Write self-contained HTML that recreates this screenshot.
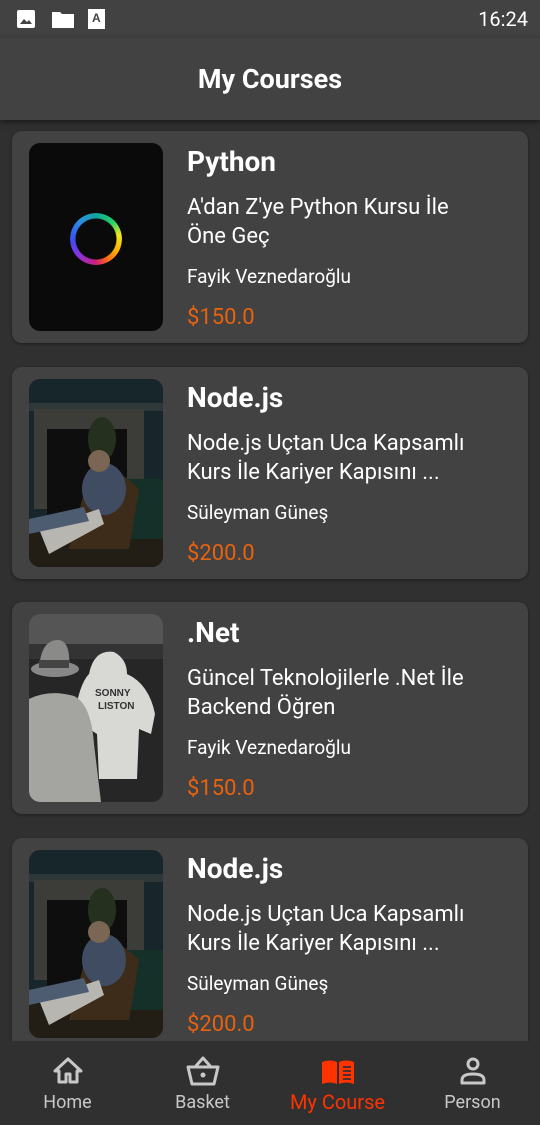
<!DOCTYPE html>
<html><head><meta charset="utf-8"><style>
*{margin:0;padding:0;box-sizing:border-box}
body{width:540px;height:1125px;background:#303030;font-family:"Roboto","Liberation Sans",sans-serif;color:#fff;overflow:hidden;position:relative}
.status{position:absolute;top:0;left:0;width:540px;height:38px;background:#424242}
.bar{position:absolute;top:38px;left:0;width:540px;height:82px;background:#424242;box-shadow:0 2px 6px rgba(0,0,0,.5);z-index:2}
.bar h1{font-size:27px;font-weight:bold;text-align:center;line-height:82px;margin-top:0}
.time{position:absolute;right:12px;top:7px;font-size:20px}
.card{position:absolute;left:12px;width:516px;height:212px;background:#424242;border-radius:10px;box-shadow:0 1px 3px rgba(0,0,0,.4)}
.img{position:absolute;left:17px;top:12px;width:134px;height:188px;border-radius:11px;overflow:hidden}
.t{position:absolute;left:175px;top:14px;font-size:28px;font-weight:bold}
.s{position:absolute;left:175px;top:62px;font-size:22px;line-height:29px;width:330px}
.a{position:absolute;left:175px;top:134px;font-size:19px}
.p{position:absolute;left:175px;top:174px;font-size:22px;color:#e8620f}
.nav{position:absolute;top:1041px;left:0;width:540px;height:84px;background:#303030;z-index:3}
.it{position:absolute;top:0;width:135px;text-align:center;color:#c8c8c8;font-size:18px}
.it svg{display:block;margin:15px auto 0}
.it span{display:block;margin-top:6px}
.ring{position:absolute;left:41px;top:70px;width:52px;height:52px;border-radius:50%;background:conic-gradient(#10a59a,#23d46a 45deg,#f0e820 80deg,#ffb000 120deg,#ff6a10 150deg,#d0207a 180deg,#8a30e0 225deg,#3a50f0 270deg,#2a90e0 320deg,#10a59a);-webkit-mask:radial-gradient(circle,transparent 20px,#000 21px);mask:radial-gradient(circle,transparent 20px,#000 21px)}
</style></head><body>
<div class="status">
<svg style="position:absolute;left:16px;top:9px" width="20" height="20"><rect x="1" y="1" width="18" height="18" rx="2" fill="#fff"/><path d="M4 15l4-5 3 3 2-2 3 4z" fill="#424242"/></svg>
<svg style="position:absolute;left:51px;top:9px" width="24" height="20"><path d="M1 3h8l2 2h12v14H1z" fill="#fff"/></svg>
<svg style="position:absolute;left:88px;top:8px" width="18" height="22"><rect x="0" y="1" width="17" height="20" fill="#fff"/><text x="4" y="14" font-size="12" font-weight="bold" fill="#424242" font-family="Liberation Sans">A</text></svg>
<div class="time">16:24</div>
</div>
<div class="bar"><h1>My Courses</h1></div>

<div class="card" style="top:131px">
<div class="img" style="background:#0a0a0a"><div class="ring"></div></div>
<div class="t">Python</div>
<div class="s">A'dan Z'ye Python Kursu İle<br>Öne Geç</div>
<div class="a">Fayik Veznedaroğlu</div>
<div class="p">$150.0</div>
</div>

<div class="card" style="top:367px">
<div class="img"><svg width="134" height="188"><rect width="134" height="188" fill="#16262a"/><rect x="0" y="24" width="134" height="8" fill="#2e3838"/><rect x="5" y="30" width="110" height="100" fill="#3c3c38"/><rect x="18" y="50" width="80" height="90" fill="#0e0e0e"/><rect x="0" y="140" width="134" height="48" fill="#221e16"/><rect x="98" y="100" width="36" height="60" fill="#153028"/><ellipse cx="73" cy="60" rx="14" ry="22" fill="#26301f"/><path d="M60 95 Q80 80 110 110 L100 170 L40 170 Z" fill="#3e2c1a"/><ellipse cx="75" cy="110" rx="22" ry="26" fill="#404c62"/><circle cx="70" cy="82" r="11" fill="#7a6652"/><path d="M10 150 L70 130 L75 145 L20 175 Z" fill="#b8b6b0"/><path d="M0 140 L55 128 L60 142 L0 155Z" fill="#4e5c72"/></svg></div>
<div class="t">Node.js</div>
<div class="s">Node.js Uçtan Uca Kapsamlı<br>Kurs İle Kariyer Kapısını ...</div>
<div class="a">Süleyman Güneş</div>
<div class="p">$200.0</div>
</div>

<div class="card" style="top:602px">
<div class="img"><svg width="134" height="188"><rect width="134" height="188" fill="#262626"/><rect x="0" y="0" width="134" height="30" fill="#555"/><rect x="0" y="30" width="134" height="15" fill="#333"/><path d="M60 60 Q65 35 85 38 Q98 45 98 60 Q120 70 126 100 L122 120 L110 115 L108 165 L70 165 L68 120 L45 105 Q50 70 60 60Z" fill="#d8d8d4"/><text x="66" y="82" font-size="10" font-weight="bold" fill="#333" font-family="Liberation Sans">SONNY</text><text x="69" y="95" font-size="10" font-weight="bold" fill="#333" font-family="Liberation Sans">LISTON</text><path d="M0 85 Q20 75 45 82 Q62 90 65 130 L72 188 L0 188Z" fill="#a4a4a0"/><ellipse cx="26" cy="55" rx="24" ry="8" fill="#888"/><path d="M10 55 Q12 25 30 26 Q42 28 40 55Z" fill="#8a8a88"/><rect x="10" y="46" width="30" height="8" fill="#444"/></svg></div>
<div class="t">.Net</div>
<div class="s">Güncel Teknolojilerle .Net İle<br>Backend Öğren</div>
<div class="a">Fayik Veznedaroğlu</div>
<div class="p">$150.0</div>
</div>

<div class="card" style="top:838px">
<div class="img"><svg width="134" height="188"><rect width="134" height="188" fill="#16262a"/><rect x="0" y="24" width="134" height="8" fill="#2e3838"/><rect x="5" y="30" width="110" height="100" fill="#3c3c38"/><rect x="18" y="50" width="80" height="90" fill="#0e0e0e"/><rect x="0" y="140" width="134" height="48" fill="#221e16"/><rect x="98" y="100" width="36" height="60" fill="#153028"/><ellipse cx="73" cy="60" rx="14" ry="22" fill="#26301f"/><path d="M60 95 Q80 80 110 110 L100 170 L40 170 Z" fill="#3e2c1a"/><ellipse cx="75" cy="110" rx="22" ry="26" fill="#404c62"/><circle cx="70" cy="82" r="11" fill="#7a6652"/><path d="M10 150 L70 130 L75 145 L20 175 Z" fill="#b8b6b0"/><path d="M0 140 L55 128 L60 142 L0 155Z" fill="#4e5c72"/></svg></div>
<div class="t">Node.js</div>
<div class="s">Node.js Uçtan Uca Kapsamlı<br>Kurs İle Kariyer Kapısını ...</div>
<div class="a">Süleyman Güneş</div>
<div class="p">$200.0</div>
</div>

<div class="nav">
<div class="it" style="left:0"><svg width="32" height="30" viewBox="0 0 32 30"><path d="M16 3L3 15h4v11h7v-8h4v8h7V15h4z" fill="none" stroke="#c8c8c8" stroke-width="3" stroke-linejoin="round"/></svg><span>Home</span></div>
<div class="it" style="left:135px"><svg width="34" height="30" viewBox="0 0 34 30"><path d="M9 11L17 2l8 9M2 11h30l-4 17H6z" fill="none" stroke="#c8c8c8" stroke-width="3" stroke-linejoin="round"/><circle cx="17" cy="19" r="2.5" fill="#c8c8c8"/></svg><span>Basket</span></div>
<div class="it" style="left:270px;color:#ff3300;font-size:20px"><svg width="34" height="30" viewBox="0 0 34 30"><path d="M1 6Q9 3 16 6V28Q9 25 1 28Z" fill="#ff3300"/><path d="M18 6Q25 3 33 6V28Q25 25 18 28Z" fill="#ff3300"/><path d="M22 11h8M22 15h8M22 19h8M22 23h8" stroke="#303030" stroke-width="1.8"/></svg><span style="margin-top:4px">My Course</span></div>
<div class="it" style="left:405px"><svg width="32" height="30" viewBox="0 0 32 30"><circle cx="16" cy="8" r="5" fill="none" stroke="#c8c8c8" stroke-width="3"/><path d="M5 27v-3q0-6 11-6t11 6v3z" fill="none" stroke="#c8c8c8" stroke-width="3" stroke-linejoin="round"/></svg><span>Person</span></div>
</div>
</body></html>
